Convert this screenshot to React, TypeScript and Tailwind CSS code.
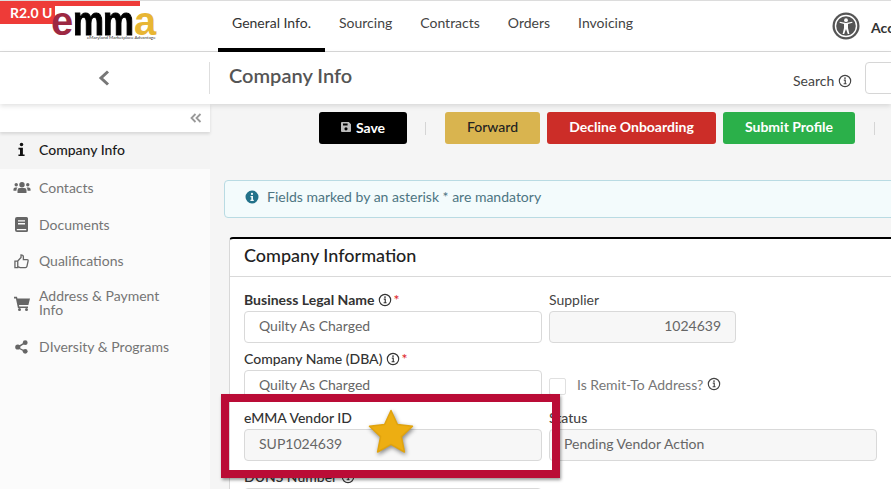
import React from "react";

const font = { fontFamily: "Lato, 'Noto Sans', sans-serif" };

function InfoO({ className = "" }: { className?: string }) {
  return (
    <svg viewBox="0 0 16 16" className={className} fill="none" stroke="currentColor">
      <circle cx="8" cy="8" r="6.5" strokeWidth="1.3" />
      <path d="M6.6 7h1.7v4M6.4 11.2h3.4" strokeWidth="1.3" />
      <circle cx="8" cy="4.7" r="1" fill="currentColor" stroke="none" />
    </svg>
  );
}

function Side({ icon, label, h, active }: { icon: React.ReactNode; label: React.ReactNode; h: string; active?: boolean }) {
  return (
    <div className={`flex items-center ${h} ${active ? "bg-[#f4f4f4] text-[#1a1a1a] pb-[2px]" : "text-[#757575]"}`}>
      <div className="w-[39px] flex justify-center pl-[4px] shrink-0 text-[#666]">{icon}</div>
      <div className="text-[14px] leading-[14px] w-[140px]">{label}</div>
    </div>
  );
}

function Field({ label, value, grey, right, w }: { label: React.ReactNode; value: string; grey?: boolean; right?: boolean; w: string }) {
  return (
    <div className={w}>
      <div className="h-[21px] text-[14px] leading-[19px] font-medium text-[#333] flex items-start gap-[4px] whitespace-nowrap">{label}</div>
      <div className={`h-[32px] rounded-[4px] border border-[#d9d9d9] flex items-center text-[14px] text-[#666] pl-[14px] pb-[4px] ${grey ? "bg-[#f7f7f7]" : "bg-white"} ${right ? "justify-end pr-[14px]" : ""}`}>
        {value}
      </div>
    </div>
  );
}

export default function App() {
  return (
    <div style={font} className="relative w-[891px] h-[489px] overflow-hidden bg-[#f5f5f5]">
      {/* top nav */}
      <div className="h-[52px] bg-white border-t border-t-[#dcdcdc] border-b border-b-[#d9d9d9] flex">
        <div className="w-[218px] shrink-0" />
        <div className="flex text-[14px] text-[#444] h-[51px]">
          <div className="w-[107px] flex justify-center pt-[11px] border-b-[4px] border-black text-[#333]">General Info.</div>
          <div className="ml-[14px] pt-[11px]">Sourcing</div>
          <div className="ml-[28px] pt-[11px]">Contracts</div>
          <div className="ml-[28px] pt-[11px]">Orders</div>
          <div className="ml-[28px] pt-[11px]">Invoicing</div>
        </div>
        <div className="ml-[199px] flex items-start pt-[11px] gap-[11px] whitespace-nowrap">
          <svg viewBox="0 0 28 28" className="w-[28px] h-[28px] shrink-0">
            <circle cx="14" cy="14" r="13.5" fill="#555" />
            <circle cx="14" cy="14" r="10.5" fill="none" stroke="#fff" strokeWidth="1.4" />
            <circle cx="14" cy="8.2" r="1.9" fill="#fff" />
            <path d="M7.5 10.8 L12 12 V16 L10.6 22 H12.2 L14 17 L15.8 22 H17.4 L16 16 V12 L20.5 10.8 L20.2 9.8 L14 11 L7.8 9.8 Z" fill="#fff" />
          </svg>
          <span className="text-[14px] font-bold text-[#333] mt-[5px]">Accessibility</span>
        </div>
      </div>

      {/* sub header */}
      <div className="relative z-10 h-[52px] bg-white shadow-[0_2px_5px_rgba(0,0,0,0.12)] flex">
        <div className="w-[209px] shrink-0 flex items-center justify-center">
          <svg viewBox="0 0 12 16" className="w-[12px] h-[16px] ml-[-1px]" fill="none" stroke="#777" strokeWidth="3">
            <path d="M10 1.5 L3 8 L10 14.5" />
          </svg>
        </div>
        <div className="w-px h-[32px] self-center bg-[#dedede] shrink-0" />
        <div className="pl-[19px] pt-[9px] text-[20px] leading-[28px] font-semibold text-[#555] w-[583px] shrink-0">Company Info</div>
        <div className="flex items-start pt-[21px] gap-[4px] text-[14px] text-[#444] leading-[16px] shrink-0">
          Search <InfoO className="w-[14px] h-[14px] mt-[1px]" />
        </div>
        <div className="ml-[13px] mt-[10px] w-[60px] h-[32px] rounded-[4px] border border-[#d6d6d6] bg-white shrink-0" />
      </div>

      <div className="flex h-[385px]">
        {/* sidebar */}
        <div className="w-[210px] shrink-0 bg-[#fbfbfb] flex flex-col">
          <div className="relative h-[28px] bg-white shadow-[0_2px_3px_rgba(0,0,0,0.12)] flex justify-end items-center pr-[8px]">
            <svg viewBox="0 0 12 10" className="w-[12px] h-[10px]" fill="none" stroke="#999" strokeWidth="1.8">
              <path d="M5.5 1 L1.5 5 L5.5 9M10.5 1 L6.5 5 L10.5 9" />
            </svg>
          </div>
          <Side active h="h-[37px]" label={<span className="font-medium">Company Info</span>} icon={
            <svg viewBox="0 0 8 16" className="w-[7px] h-[15px]" fill="#111"><circle cx="4" cy="2.2" r="2" /><path d="M0.5 6 H5.6 V13.6 H7.5 V15.5 H0.5 V13.6 H2.3 V7.9 H0.5 Z" /></svg>
          } />
          <Side h="h-[37px]" label="Contacts" icon={
            <svg viewBox="0 0 20 14" className="w-[18px] h-[13px]" fill="#666">
              <circle cx="10" cy="4" r="3" /><circle cx="3.6" cy="4" r="1.9" /><circle cx="16.4" cy="4" r="1.9" />
              <path d="M5 13 V10 Q5 7.6 7.5 7.6 H12.5 Q15 7.6 15 10 V13 Z M0.5 10.5 V9 Q0.5 6.9 2.6 6.9 H5 Q3.8 8 3.8 10.5 Z M19.5 10.5 V9 Q19.5 6.9 17.4 6.9 H15 Q16.2 8 16.2 10.5 Z" />
            </svg>
          } />
          <Side h="h-[37px]" label="Documents" icon={
            <svg viewBox="0 0 13 15" className="w-[13px] h-[15px]" fill="#666" fillRule="evenodd"><path d="M2 0 H11.5 Q13 0 13 1.5 V13.5 Q13 15 11.5 15 H2 Q0 15 0 13 V2 Q0 0 2 0 Z M3 3.2 V4.6 H10 V3.2 Z M3 6 V7.4 H10 V6 Z M1.8 12 V13.2 H11.2 V12 Z" /></svg>
          } />
          <Side h="h-[36px]" label="Qualifications" icon={
            <svg viewBox="0 0 16 16" className="w-[15px] h-[15px]" fill="none" stroke="#666" strokeWidth="1.4"><path d="M1 7.5 H4 V14.5 H1 Z M4 7.5 L7.5 3.8 V1 Q10 1 10 3.2 V6 H14 Q15.3 6 15 7.5 L13.8 13.2 Q13.5 14.5 12.2 14.5 H6.5 L4 13.4" /></svg>
          } />
          <Side h="h-[48px]" label="Address & Payment Info" icon={
            <svg viewBox="0 0 16 15" className="w-[16px] h-[15px]" fill="#666"><path d="M0 0.8 H3 L3.4 2.4 H16 L14.4 9 H5 L5.3 10.4 H14 V12 H3.9 L1.9 2.4 H0 Z" /><circle cx="5.5" cy="13.5" r="1.5" /><circle cx="12.5" cy="13.5" r="1.5" /></svg>
          } />
          <div className="h-[2px]" />
          <Side h="h-[36px]" label="DIversity & Programs" icon={
            <svg viewBox="0 0 14 15" className="w-[13px] h-[14px]" fill="#666"><circle cx="11" cy="2.8" r="2.6" /><circle cx="3" cy="7.5" r="2.8" /><circle cx="11" cy="12.2" r="2.6" /><path d="M3 6.6 L10.5 2 L11.4 3.5 L4 8 L11.4 11.5 L10.5 13 L2.6 8.6 Z" /></svg>
          } />
        </div>

        {/* main */}
        <div className="flex-1 min-w-0 pl-[14px]">
          <div className="flex items-center h-[45px] pt-[3px]">
            <div className="w-[95px] shrink-0" />
            <div className="w-[88px] h-[32px] rounded-[3px] bg-black text-white font-bold text-[14px] flex items-center justify-center gap-[5px] pb-[2px]">
              <svg viewBox="0 0 10 10" className="w-[10px] h-[10px]" fill="#bbb" fillRule="evenodd"><path d="M1 0 H7.8 L10 2.2 V9 Q10 10 9 10 H1 Q0 10 0 9 V1 Q0 0 1 0 Z M2 1.4 V3.6 H6.6 V1.4 Z M5 5.2 A1.6 1.6 0 1 0 5 8.4 A1.6 1.6 0 1 0 5 5.2 Z" /></svg>
              Save
            </div>
            <div className="w-px h-[13px] bg-[#d5d5d5] ml-[18px] mr-[19px]" />
            <div className="w-[95px] h-[32px] rounded-[3px] bg-[#d9b44f] text-[#222] font-medium text-[14px] flex items-center justify-center pb-[4px]">Forward</div>
            <div className="w-[169px] h-[32px] ml-[7px] rounded-[3px] bg-[#cc2d28] text-white font-bold text-[14px] flex items-center justify-center pb-[4px]">Decline Onboarding</div>
            <div className="w-[132px] h-[32px] ml-[7px] rounded-[3px] bg-[#2bb04a] text-white font-bold text-[14px] flex items-center justify-center pb-[4px]">Submit Profile</div>
            <div className="w-px h-[13px] bg-[#d5d5d5] ml-[19px]" />
          </div>

          <div className="mt-[31px] w-[700px] h-[38px] rounded-[4px] border border-[#b9dbe3] bg-[#f3fbfc] flex items-center pl-[20px] pb-[5px] gap-[8px] text-[14px] text-[#4d7582]">
            <svg viewBox="0 0 14 14" className="w-[14px] h-[14px] shrink-0" fill="#23728a" fillRule="evenodd"><path d="M7 0.5 A6.5 6.5 0 1 0 7 13.5 A6.5 6.5 0 1 0 7 0.5 Z M7 2.8 A1.1 1.1 0 1 1 7 5 A1.1 1.1 0 1 1 7 2.8 Z M5.5 6 H8 V9.8 H8.8 V11 H5.4 V9.8 H6.3 V7.2 H5.5 Z" /></svg>
            Fields marked by an asterisk * are mandatory
          </div>

          <div className="mt-[19px] ml-[5px] w-[720px] h-[300px] bg-white border-t-[2px] border-t-black border-l border-l-[#d8d8d8] rounded-tl-[4px]">
            <div className="h-[38px] border-b border-b-[#d9d9d9] pl-[14px] text-[18px] font-medium leading-[33px] text-[#222]">Company Information</div>
            <div className="pl-[14px] pt-[13px] flex flex-col gap-[6px]">
              <div className="flex gap-[7px]">
                <Field w="w-[298px]" value="Quilty As Charged" label={<><span className="font-bold">Business Legal Name</span> <InfoO className="w-[14px] h-[14px] mt-[3px] text-[#333]" /><span className="text-[#d22] -ml-[3px]">*</span></>} />
                <Field w="w-[187px]" grey right value="1024639" label={<span className="font-normal text-[#444]">Supplier</span>} />
              </div>
              <div className="flex gap-[7px]">
                <Field w="w-[298px]" value="Quilty As Charged" label={<>Company Name (DBA) <InfoO className="w-[14px] h-[14px] mt-[3px] text-[#333]" /><span className="text-[#d22] -ml-[3px]">*</span></>} />
                <div className="flex items-start pt-[29px] text-[14px] text-[#777] leading-[17px]">
                  <div className="w-[17px] h-[17px] rounded-[2px] border border-[#e0e0e0] bg-white mr-[11px]" />
                  <span className="mr-[4px] -mt-[2px]">Is Remit-To Address?</span>
                  <InfoO className="w-[14px] h-[14px] -mt-[1px] text-[#444]" />
                </div>
              </div>
              <div className="flex gap-[7px]">
                <Field w="w-[298px]" grey value="SUP1024639" label={<span className="text-[#333]">eMMA Vendor ID</span>} />
                <Field w="w-[328px]" grey value="Pending Vendor Action" label={<span className="text-[#444]">Status</span>} />
              </div>
              <Field w="w-[298px]" value="" label={<>DUNS Number <InfoO className="w-[14px] h-[14px] mt-[3px] text-[#333]" /></>} />
            </div>
          </div>
        </div>
      </div>

      {/* banner and logo overlap the header */}
      <div className="absolute left-0 top-[1px] w-[140px] h-[5px] bg-[#ee3b38]" />
      <div className="absolute left-0 top-[1px] w-[55px] h-[23px] bg-[#ee3b38] text-white font-bold text-[14px] leading-[23px] pl-[10px] whitespace-nowrap">R2.0 U</div>
      <div className="absolute left-[51px] top-[8px] h-[27px] flex items-start whitespace-nowrap" style={{ fontFamily: "'Liberation Sans', sans-serif" }}>
        <span className="font-bold text-[40px] leading-[27px] text-[#9d2842] w-[22px]">e</span>
        <span className="font-bold text-[40px] leading-[27px] text-black [-webkit-text-stroke:1px_black] w-[61px] inline-block scale-x-[0.87] origin-left tracking-[-1px]">mm</span>
        <span className="font-bold text-[40px] leading-[27px] text-[#e8b634]">a</span>
      </div>
      <div className="absolute left-[87px] top-[35px] text-[4.5px] leading-[5px] text-[#333] whitespace-nowrap">eMaryland Marketplace Advantage</div>

      {/* callout rectangle */}
      <div className="absolute left-[221px] top-[394px] w-[339px] h-[84px] border-[8px] border-[#ba0c36] shadow-[1px_2px_3px_rgba(0,0,0,0.4)]" />
      <svg viewBox="0 0 46 46" className="absolute left-[368px] top-[409px] w-[46px] h-[46px]" style={{ filter: "drop-shadow(1px 2px 2px rgba(0,0,0,.45))" }}>
        <path d="M23 1.5 L29.4 15.5 L44.5 17.2 L33.4 27.6 L36.4 43 L23 35.4 L9.6 43 L12.6 27.6 L1.5 17.2 L16.6 15.5 Z" fill="#edae12" stroke="#e0a30e" strokeLinejoin="round" strokeWidth="1.5" />
      </svg>
    </div>
  );
}
